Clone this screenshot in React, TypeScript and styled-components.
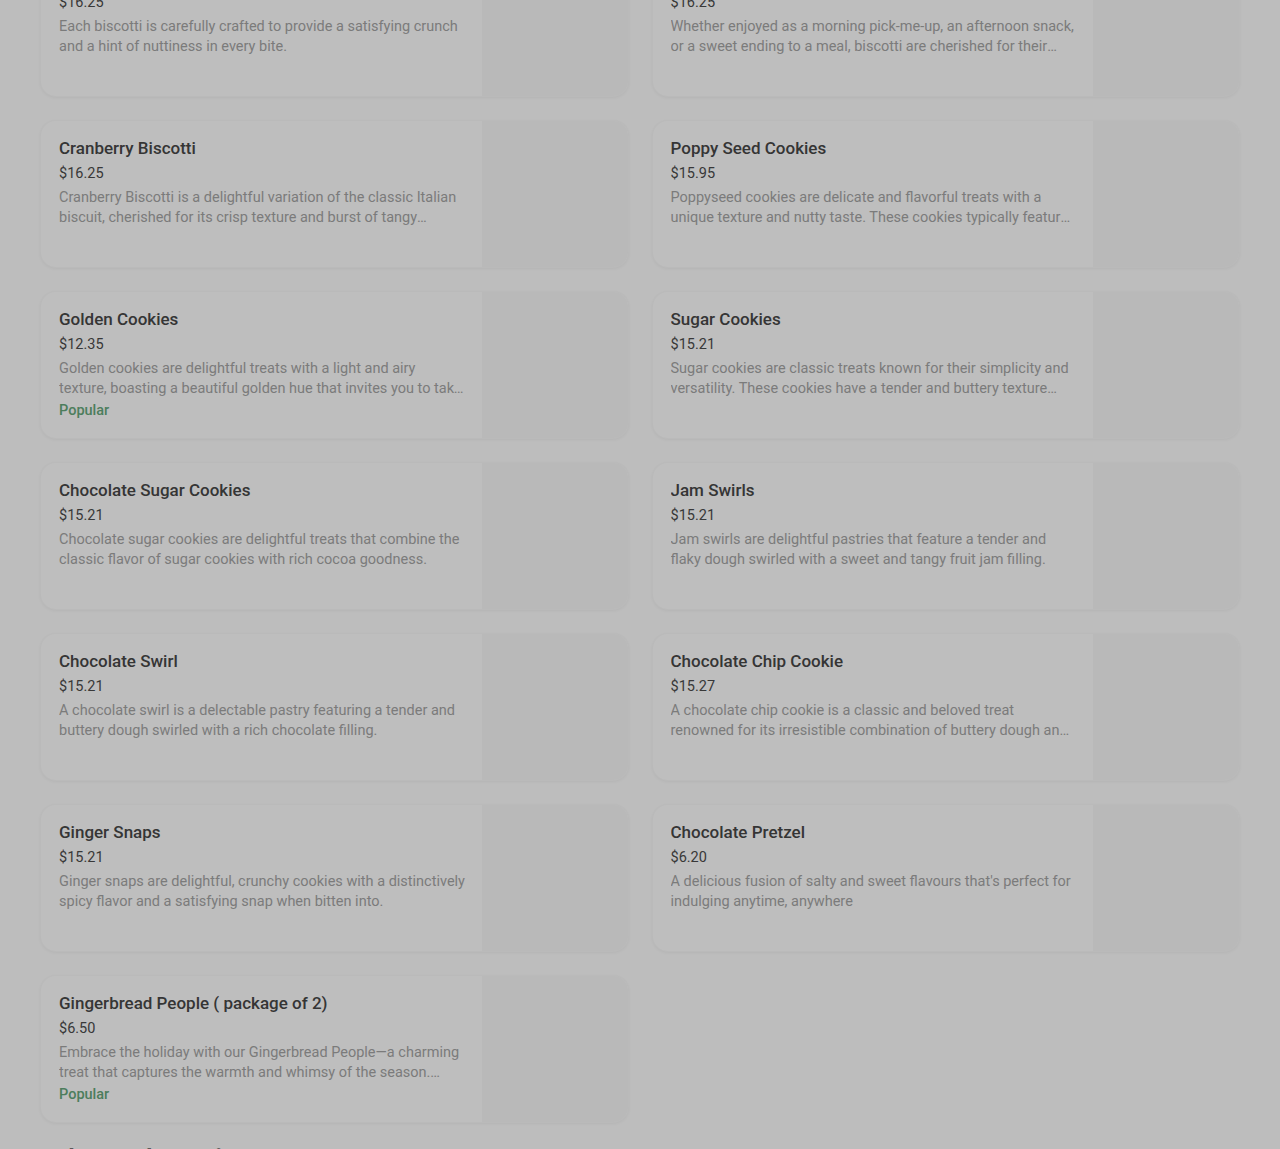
import React from "react";
import styled, { createGlobalStyle } from "styled-components";

const Global = createGlobalStyle`
  html, body { margin: 0; padding: 0; background: #bdbdbd; }
  body { font-family: Roboto, "Liberation Sans", Arial, sans-serif; overflow: hidden; }
`;

type Item = { name: string; price: string; desc: string; popular?: boolean };

const items: Item[] = [
  { name: "Almond Biscotti", price: "$16.25", desc: "Each biscotti is carefully crafted to provide a satisfying crunch and a hint of nuttiness in every bite." },
  { name: "Chocolate Biscotti", price: "$16.25", desc: "Whether enjoyed as a morning pick-me-up, an afternoon snack, or a sweet ending to a meal, biscotti are cherished for their versatility and timeless appeal." },
  { name: "Cranberry Biscotti", price: "$16.25", desc: "Cranberry Biscotti is a delightful variation of the classic Italian biscuit, cherished for its crisp texture and burst of tangy sweetness from dried cranberries." },
  { name: "Poppy Seed Cookies", price: "$15.95", desc: "Poppyseed cookies are delicate and flavorful treats with a unique texture and nutty taste. These cookies typically feature a buttery dough studded with poppy seeds." },
  { name: "Golden Cookies", price: "$12.35", desc: "Golden cookies are delightful treats with a light and airy texture, boasting a beautiful golden hue that invites you to take a bite.", popular: true },
  { name: "Sugar Cookies", price: "$15.21", desc: "Sugar cookies are classic treats known for their simplicity and versatility. These cookies have a tender and buttery texture with a sweet finish." },
  { name: "Chocolate Sugar Cookies", price: "$15.21", desc: "Chocolate sugar cookies are delightful treats that combine the classic flavor of sugar cookies with rich cocoa goodness." },
  { name: "Jam Swirls", price: "$15.21", desc: "Jam swirls are delightful pastries that feature a tender and flaky dough swirled with a sweet and tangy fruit jam filling." },
  { name: "Chocolate Swirl", price: "$15.21", desc: "A chocolate swirl is a delectable pastry featuring a tender and buttery dough swirled with a rich chocolate filling." },
  { name: "Chocolate Chip Cookie", price: "$15.27", desc: "A chocolate chip cookie is a classic and beloved treat renowned for its irresistible combination of buttery dough and rich chocolate chips." },
  { name: "Ginger Snaps", price: "$15.21", desc: "Ginger snaps are delightful, crunchy cookies with a distinctively spicy flavor and a satisfying snap when bitten into." },
  { name: "Chocolate Pretzel", price: "$6.20", desc: "A delicious fusion of salty and sweet flavours that's perfect for indulging anytime, anywhere" },
  { name: "Gingerbread People ( package of 2)", price: "$6.50", desc: "Embrace the holiday with our Gingerbread People—a charming treat that captures the warmth and whimsy of the season. Each one is baked with love.", popular: true },
];

const Page = styled.main`
  padding: 0 40px;
  margin-top: -51px;
`;

const Grid = styled.ul`
  list-style: none;
  margin: 0;
  padding: 0;
  display: grid;
  grid-template-columns: 1fr 1fr;
  column-gap: 23px;
  row-gap: 23px;
`;

const Card = styled.li`
  display: flex;
  height: 148px;
  box-sizing: border-box;
  border-radius: 16px;
  overflow: hidden;
  background: #bebebe;
  border: 1px solid rgba(0, 0, 0, 0.02);
  box-shadow: 0 1px 3px rgba(0, 0, 0, 0.045);
`;

const Info = styled.div`
  flex: 1;
  min-width: 0;
  padding: 17px 16px 0 18px;
  display: flex;
  flex-direction: column;
`;

const Name = styled.h3`
  margin: 0;
  font-size: 17px;
  line-height: 20px;
  font-weight: 500;
  color: #353535;
  white-space: nowrap;
  overflow: hidden;
  text-overflow: ellipsis;
`;

const Price = styled.div`
  margin-top: 6px;
  font-size: 14.5px;
  line-height: 20px;
  color: #383838;
`;

const Desc = styled.p`
  margin: 4px 0 0;
  font-size: 14.5px;
  line-height: 20px;
  color: #7b7b7b;
  display: -webkit-box;
  -webkit-line-clamp: 2;
  -webkit-box-orient: vertical;
  overflow: hidden;
`;

const Badge = styled.span`
  margin-top: 2px;
  font-size: 14.5px;
  line-height: 20px;
  font-weight: 500;
  color: #4c7d5c;
`;

const Thumb = styled.div`
  flex: 0 0 146px;
  background: #b9b9b9;
`;

const Section = styled.h2`
  margin: 19px 0 0;
  font-size: 24px;
  line-height: 32px;
  font-weight: 700;
  color: #5a5a5a;
`;

export default function App() {
  return (
    <>
      <Global />
      <Page>
        <Grid>
          {items.map((it) => (
            <Card key={it.name}>
              <Info>
                <Name>{it.name}</Name>
                <Price>{it.price}</Price>
                <Desc>{it.desc}</Desc>
                {it.popular && <Badge>Popular</Badge>}
              </Info>
              <Thumb />
            </Card>
          ))}
        </Grid>
        <Section>Cakes and Pastries</Section>
      </Page>
    </>
  );
}
